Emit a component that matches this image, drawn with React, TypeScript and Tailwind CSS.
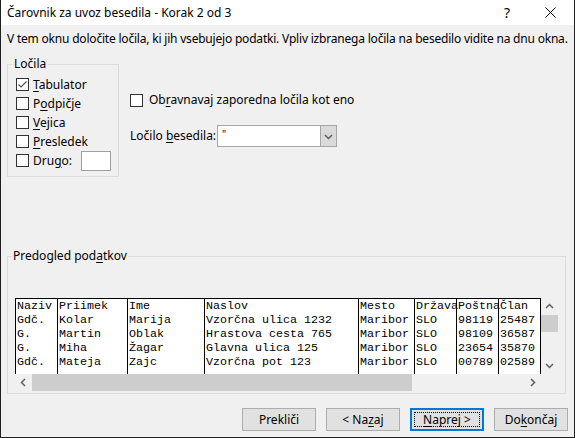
import React from "react";

const UI = { fontFamily: '"Noto Sans", "Open Sans", sans-serif' };
const MONO = { fontFamily: '"Liberation Mono", "Courier New", monospace' };

function U({ children }: { children: React.ReactNode }) {
  return <span className="underline underline-offset-[2px] decoration-[1px]">{children}</span>;
}

function Check({ checked = false }: { checked?: boolean }) {
  return (
    <div className="w-[13px] h-[13px] border border-[#333333] bg-white flex items-center justify-center shrink-0">
      {checked && (
        <svg width="11" height="11" viewBox="0 0 11 11">
          <polyline points="1.5,5.5 4,8 9.5,2.5" fill="none" stroke="#555" strokeWidth="1.2" />
        </svg>
      )}
    </div>
  );
}

function CbRow({ label, checked }: { label: React.ReactNode; checked?: boolean }) {
  return (
    <div className="h-[19px] flex items-center gap-[4px]">
      <Check checked={checked} />
      <span className="text-[12px] leading-[16px] text-black whitespace-nowrap">{label}</span>
    </div>
  );
}

const cols: { w: number; lines: string[] }[] = [
  { w: 42, lines: ["Naziv", "Gdč.", "G.", "G.", "Gdč."] },
  { w: 70, lines: ["Priimek", "Kolar", "Martin", "Miha", "Mateja"] },
  { w: 77, lines: ["Ime", "Marija", "Oblak", "Žagar", "Zajc"] },
  { w: 154, lines: ["Naslov", "Vzorčna ulica 1232", "Hrastova cesta 765", "Glavna ulica 125", "Vzorčna pot 123"] },
  { w: 56, lines: ["Mesto", "Maribor", "Maribor", "Maribor", "Maribor"] },
  { w: 42, lines: ["Država", "SLO", "SLO", "SLO", "SLO"] },
  { w: 42, lines: ["Poštna", "98119", "98109", "23654", "00789"] },
  { w: 43, lines: ["Član", "25487", "36587", "35870", "02589"] },
];

function Chev({ dir }: { dir: "up" | "down" | "left" | "right" }) {
  const pts: Record<string, string> = {
    up: "1,6 4.5,2.5 8,6",
    down: "1,3 4.5,6.5 8,3",
    left: "6,1 2.5,4.5 6,8",
    right: "3,1 6.5,4.5 3,8",
  };
  return (
    <svg width="9" height="9" viewBox="0 0 9 9">
      <polyline points={pts[dir]} fill="none" stroke="#606060" strokeWidth="1.5" />
    </svg>
  );
}

function Btn({ children, primary }: { children: React.ReactNode; primary?: boolean }) {
  return (
    <div
      className={
        "w-[74px] h-[23px] flex items-center justify-center text-[12px] text-black bg-[#e1e1e1] " +
        (primary ? "border-2 border-[#0078d7]" : "border border-[#adadad]")
      }
    >
      {primary ? (
        <div className="w-[66px] h-[15px] border border-dotted border-black flex items-center justify-center leading-[13px]">
          {children}
        </div>
      ) : (
        <span className="leading-[16px]">{children}</span>
      )}
    </div>
  );
}

export default function App() {
  return (
    <div className="w-[575px] h-[438px] bg-[#f0f0f0] border-l border-r border-b border-[#1f1f1f] flex flex-col overflow-hidden text-black" style={UI}>
      {/* Title bar */}
      <div className="h-[25px] bg-white flex items-center shrink-0">
        <span className="pl-[6px] text-[12px] leading-[16px] flex-1">Čarovnik za uvoz besedila - Korak 2 od 3</span>
        <span className="w-[20px] text-center text-[14px] leading-[16px] mr-[28px]">?</span>
        <svg width="11" height="11" viewBox="0 0 11 11" className="mr-[18px]">
          <path d="M0.5 0.5 L10.5 10.5 M10.5 0.5 L0.5 10.5" stroke="#000" strokeWidth="1" />
        </svg>
      </div>

      {/* Body */}
      <div className="flex flex-col flex-1 px-[6px]">
        <p className="pt-[6px] text-[12px] leading-[16px] tracking-[-0.2px] whitespace-nowrap">
          V tem oknu določite ločila, ki jih vsebujejo podatki. Vpliv izbranega ločila na besedilo vidite na dnu okna.
        </p>

        <div className="flex mt-[9px]">
          <fieldset className="w-[112px] min-w-0 shrink-0 h-[121px] border border-[#dcdcdc] pl-[8px] pr-[2px] pt-[3px]">
            <legend className="ml-[-3px] px-[1px] text-[12px] leading-[16px]">Ločila</legend>
            <CbRow checked label={<><U>T</U>abulator</>} />
            <CbRow label={<>P<U>o</U>dpičje</>} />
            <CbRow label={<><U>V</U>ejica</>} />
            <CbRow label={<><U>P</U>resledek</>} />
            <div className="h-[19px] flex items-center gap-[4px]">
              <Check />
              <span className="w-[44px] text-[12px] leading-[16px] whitespace-nowrap">Dru<U>g</U>o:</span>
              <div className="w-[30px] h-[20px] bg-white border border-[#a0a0a0] shrink-0" />
            </div>
          </fieldset>

          <div className="flex flex-col ml-[11px] pt-[37px]">
            <div className="flex items-center gap-[6px] h-[14px]">
              <Check />
              <span className="text-[12px] leading-[16px]">Ob<U>r</U>avnavaj zaporedna ločila kot eno</span>
            </div>
            <div className="flex items-center mt-[18px]">
              <span className="w-[87px] text-[12px] leading-[16px]">Ločilo <U>b</U>esedila:</span>
              <div className="w-[120px] h-[22px] border border-[#a5a5a5] flex bg-white">
                <div className="flex-1 text-[10px] leading-[12px] pl-[4px] pt-[2px] text-black">"</div>
                <div className="w-[16px] bg-[#dadada] border-l border-[#a5a5a5] flex items-center justify-center">
                  <Chev dir="down" />
                </div>
              </div>
            </div>
          </div>
        </div>

        <fieldset className="mt-[71px] w-[559px] min-w-0 h-[146px] border border-[#dcdcdc] pl-[7px] pt-[34px]">
          <legend className="ml-[-3px] px-[1px] text-[12px] leading-[16px]">
            Predogled pod<U>a</U>tkov
          </legend>
          <div className="w-[543px] flex flex-col">
            <div className="flex h-[76px]">
              <div className="w-[526px] bg-white border-t border-black flex overflow-hidden" style={MONO}>
                {cols.map((c, i) => (
                  <div
                    key={i}
                    className={"shrink-0 border-l border-black pl-[1px] " + (i === cols.length - 1 ? "border-r" : "")}
                    style={{ width: c.w }}
                  >
                    {c.lines.map((l, j) => (
                      <div key={j} className="h-[14px] text-[11.67px] leading-[14px] whitespace-nowrap text-black">
                        {l}
                      </div>
                    ))}
                  </div>
                ))}
              </div>
              <div className="w-[17px] flex flex-col items-center bg-[#f0f0f0]">
                <div className="h-[17px] flex items-center justify-center"><Chev dir="up" /></div>
                <div className="w-[17px] h-[17px] bg-[#cdcdcd]" />
                <div className="flex-1" />
                <div className="h-[17px] flex items-center justify-center"><Chev dir="down" /></div>
              </div>
            </div>
            <div className="flex h-[17px]">
              <div className="w-[526px] flex items-center bg-[#f0f0f0]">
                <div className="w-[17px] flex items-center justify-center"><Chev dir="left" /></div>
                <div className="w-[380px] h-[17px] bg-[#cdcdcd]" />
                <div className="flex-1" />
                <div className="w-[17px] flex items-center justify-center"><Chev dir="right" /></div>
              </div>
              <div className="w-[17px]" />
            </div>
          </div>
        </fieldset>

        <div className="flex justify-end gap-[10px] mt-[14px]">
          <Btn>Prekliči</Btn>
          <Btn>&lt; Na<U>z</U>aj</Btn>
          <Btn primary><U>N</U>aprej &gt;</Btn>
          <Btn>Do<U>k</U>ončaj</Btn>
        </div>
      </div>
    </div>
  );
}
